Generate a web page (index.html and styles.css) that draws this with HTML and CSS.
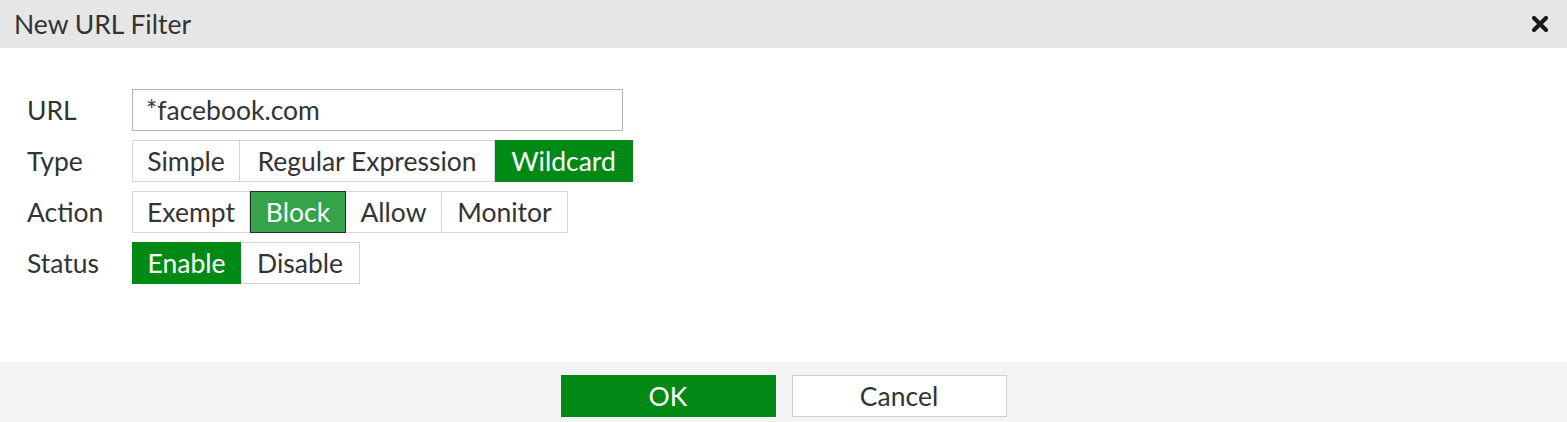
FILE: index.html
```html
<!DOCTYPE html>
<html>
<head>
<meta charset="utf-8">
<link rel="stylesheet" href="styles.css">
</head>
<body>
<div class="dialog">
  <div class="header">
    <span class="title">New URL Filter</span>
    <svg class="close" viewBox="0 0 20 20" width="20" height="20"><path d="M4 4 L16 16 M16 4 L4 16" stroke="#1a1a1a" stroke-width="4.2" stroke-linecap="round"/></svg>
  </div>
  <div class="body">
    <div class="row">
      <div class="label">URL</div>
      <div class="input">*facebook.com</div>
    </div>
    <div class="row">
      <div class="label">Type</div>
      <div class="seg">
        <div class="opt w-simple">Simple</div>
        <div class="opt w-regex">Regular Expression</div>
        <div class="opt on w-wild">Wildcard</div>
      </div>
    </div>
    <div class="row">
      <div class="label">Action</div>
      <div class="seg">
        <div class="opt w-exempt">Exempt</div>
        <div class="opt focus w-block">Block</div>
        <div class="opt w-allow">Allow</div>
        <div class="opt w-monitor">Monitor</div>
      </div>
    </div>
    <div class="row">
      <div class="label">Status</div>
      <div class="seg">
        <div class="opt on w-enable">Enable</div>
        <div class="opt w-disable">Disable</div>
      </div>
    </div>
  </div>
  <div class="footer">
    <button class="btn primary">OK</button>
    <button class="btn">Cancel</button>
  </div>
</div>
</body>
</html>
```
FILE: styles.css
```css
html, body { margin: 0; padding: 0; background: #fff; }
body { font-family: Lato, "Open Sans", sans-serif; color: #333; }
.dialog { width: 1567px; height: 422px; display: flex; flex-direction: column; }
.header {
  height: 48px; background: #e6e6e6; display: flex; align-items: center;
  justify-content: space-between; padding: 0 17px 0 14px; box-sizing: border-box;
}
.title { font-size: 26.5px; color: #333; }
.close { display: block; }
.body { flex: 1; padding: 41px 0 0 27px; display: flex; flex-direction: column; gap: 9px; }
.row { display: flex; align-items: center; height: 42px; }
.label { width: 105px; font-size: 26.5px; color: #333; }
.input {
  width: 491px; height: 42px; box-sizing: border-box; border: 1px solid #b5b5b5;
  padding: 0 13px; font-size: 26.5px; line-height: 40px; color: #333;
}
.seg { display: flex; height: 42px; }
.opt {
  box-sizing: border-box; height: 42px; border: 1px solid #d6d6d6; border-left: none;
  font-size: 26.5px; line-height: 40px; text-align: center; color: #333; background: #fff;
}
.opt:first-child { border-left: 1px solid #d6d6d6; }
.opt.on { background: #008a15; border-color: #008a15; color: #fff; }
.opt.focus { background: #34a34a; border: 1px solid #2a2a2a; color: #fff; }
.w-simple { width: 108px; }
.w-regex { width: 255px; }
.w-wild { width: 138px; }
.w-exempt { width: 118px; }
.w-block { width: 96px; }
.w-allow { width: 96px; }
.w-monitor { width: 126px; }
.w-enable { width: 109px; }
.w-disable { width: 119px; }
.footer {
  height: 60px; background: #f4f4f4; display: flex; justify-content: center;
  gap: 16px; padding-top: 13px; box-sizing: border-box;
}
.btn {
  width: 215px; height: 42px; box-sizing: border-box; border: 1px solid #cfcfcf;
  background: #fff; font-family: Lato, sans-serif; font-size: 26.5px; color: #333; padding: 0;
}
.btn.primary { background: #008a15; border-color: #008a15; color: #fff; }
```
